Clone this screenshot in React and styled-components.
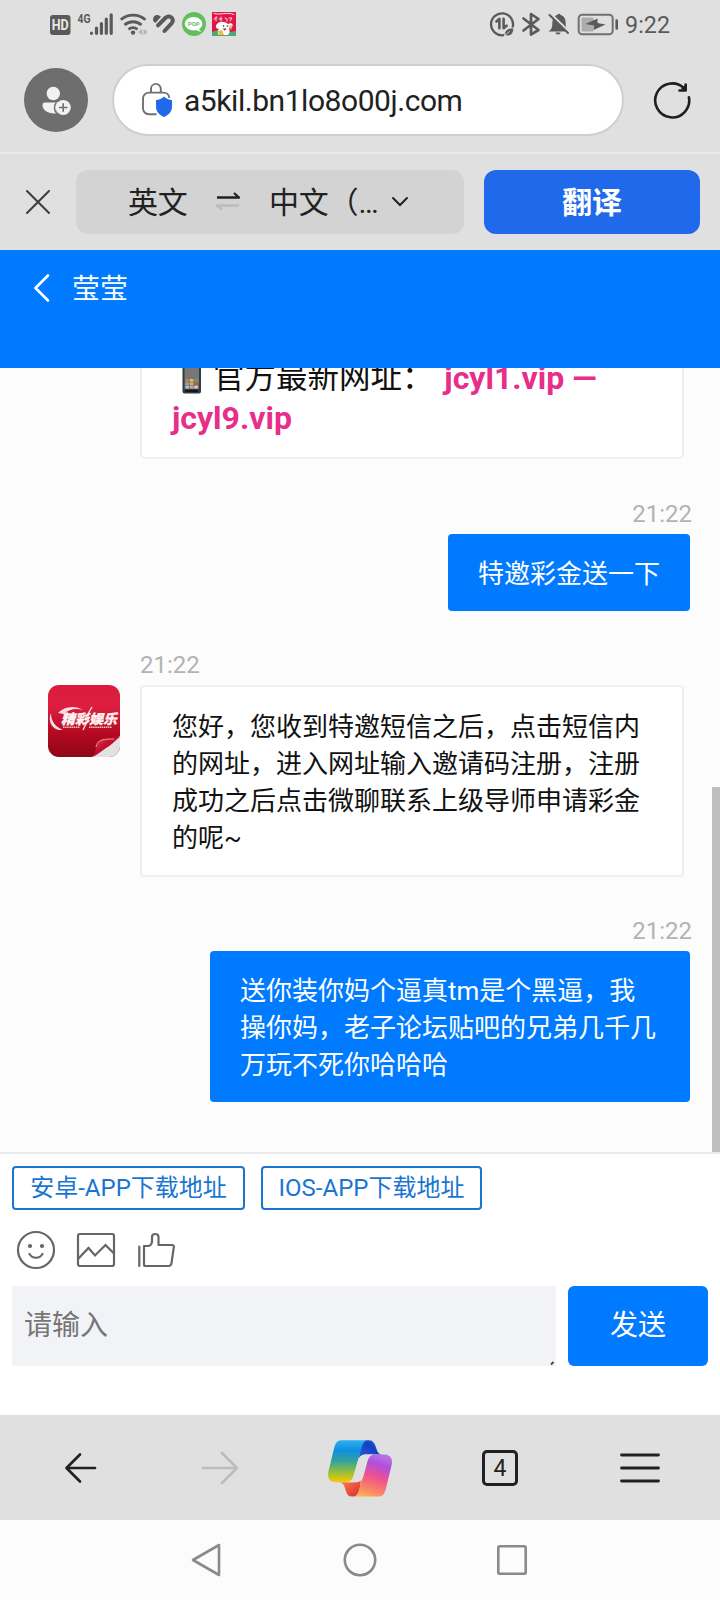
import React from "react";
import styled, { createGlobalStyle, css } from "styled-components";

const Global = createGlobalStyle`
  *, *::before, *::after { box-sizing: border-box; }
  body {
    margin: 0;
    background: #fcfcfc;
    font-family: Roboto, "Noto Sans CJK SC", sans-serif;
  }
  svg { display: block; flex: none; }
  button { font-family: inherit; margin: 0; }
`;

const Screen = styled.div`
  width: 720px;
  height: 1600px;
  display: flex;
  flex-direction: column;
  overflow: hidden;
`;

/* ---------- system status bar ---------- */
const StatusBar = styled.header`
  height: 50px;
  flex: none;
  padding: 0 50px;
  background: #e0e0e0;
  color: #5a5a5a;
  display: flex;
  justify-content: space-between;
`;
const StatusGroup = styled.div`
  display: flex;
  align-items: flex-start;
`;
const Clock = styled.span`
  font-size: 23.3px;
  line-height: 50px;
  margin-left: 6px;
`;

/* ---------- browser address bar ---------- */
const AddressBar = styled.div`
  height: 104px;
  flex: none;
  padding: 14px 24px 0;
  background: #e0e0e0;
  border-bottom: 2px solid #e9e9e9;
  display: flex;
  align-items: flex-start;
`;
const Profile = styled.button`
  width: 64px;
  height: 64px;
  margin-top: 4px;
  padding: 0;
  border: 0;
  border-radius: 50%;
  background: #6e6e6e;
`;
const UrlField = styled.div`
  width: 512px;
  height: 72px;
  margin-left: 24px;
  padding-left: 27px;
  border: 2px solid #cfcfcf;
  border-radius: 36px;
  background: #fff;
  display: flex;
  align-items: center;
`;
const UrlText = styled.span`
  margin-left: 12px;
  font-size: 30px;
  letter-spacing: -0.45px;
  color: #212121;
  white-space: nowrap;
`;
const Reload = styled.button`
  margin: 17px 0 0 29px;
  padding: 0;
  border: 0;
  background: none;
`;

/* ---------- translate bar ---------- */
const TranslateBar = styled.div`
  height: 96px;
  flex: none;
  padding: 0 20px 0 24px;
  background: #e0e0e0;
  display: flex;
  align-items: center;
  color: #212121;
`;
const LanguagePill = styled.div`
  width: 388px;
  height: 64px;
  margin: 0 20px 0 24px;
  padding-left: 52px;
  border-radius: 12px;
  background: #d3d3d3;
  display: flex;
  align-items: center;
  font-size: 30px;
  white-space: nowrap;
`;
const Language = styled.span`
  width: ${(p) => p.$width}px;
  padding-bottom: 4px;
  letter-spacing: -0.2px;
`;
const SwapIcon = styled.svg`
  margin-right: 29px;
`;
const TranslateButton = styled.button`
  flex: 1;
  height: 64px;
  border: 0;
  padding: 0 0 4px;
  border-radius: 12px;
  background: #2169eb;
  color: #fff;
  font-size: 30px;
  font-weight: 700;
`;

/* ---------- chat header ---------- */
const ChatHeader = styled.div`
  height: 118px;
  flex: none;
  padding: 16px 32px 0;
  background: #007aff;
  color: #fff;
  display: flex;
`;
const ChatTitle = styled.h1`
  margin: 0 0 0 20px;
  font-size: 28px;
  line-height: 48px;
  font-weight: 400;
`;

/* ---------- messages ---------- */
const MessageList = styled.main`
  position: relative;
  height: 784px;
  flex: none;
  padding: 0 30px 50px 48px;
  overflow: hidden;
  background: #fcfcfc;
  display: flex;
  flex-direction: column;
  justify-content: flex-end;
  gap: 40.5px;
`;
const MessageRow = styled.div`
  display: flex;
  flex-direction: column;
  flex: none;
  align-items: ${(p) => (p.$own ? "flex-end" : "flex-start")};
  padding-left: ${(p) => (p.$own ? 0 : 92)}px;
`;
const WithAvatar = styled.div`
  display: flex;
  gap: 20px;
  margin-left: -92px;
`;
const Time = styled.time`
  height: 34px;
  font-size: 24px;
  line-height: 29px;
  color: #b3b3b3;
  margin-right: -2px;
`;
const Bubble = styled.div`
  font-size: 26px;
  line-height: 37px;
  border-radius: 4px;
  ${(p) =>
    p.$own
      ? css`
          max-width: 480px;
          padding: 22px 30px 18px;
          background: #007aff;
          color: #fff;
        `
      : css`
          width: 544px;
          padding: 21.5px 30px 18px;
          border: 2px solid #efefef;
          background: #fff;
          color: #111;
        `}
`;
const NoticeBubble = styled(Bubble)`
  font-size: 31.5px;
  line-height: 40px;
  padding: 0 20px 18px 30px;
  border-radius: 5px;
`;
const NoticeLine = styled.div`
  display: flex;
  align-items: flex-start;
  white-space: pre;
  svg { margin: 3px 11px 0 10px; }
`;
const Link = styled.b`
  color: #e62e8a;
  font-size: 32px;
`;
const NoticeLink = styled(Link)`
  margin-left: 3px;
`;
const Scrollbar = styled.div`
  position: absolute;
  right: 0;
  top: 419px;
  bottom: 0;
  width: 8px;
  background: #bfbfbf;
`;

/* ---------- composer ---------- */
const Composer = styled.section`
  height: 263px;
  flex: none;
  padding: 12px 12px 0;
  border-top: 2px solid #ebebed;
  background: #fff;
`;
const QuickLinks = styled.div`
  display: flex;
  gap: 16px;
`;
const QuickLink = styled.button`
  width: ${(p) => p.$width}px;
  height: 44px;
  padding: 0;
  border: 2px solid #1a75d2;
  border-radius: 4px;
  background: #fff;
  color: #1a75d2;
  font-size: 24px;
  line-height: 36px;
  white-space: nowrap;
`;
const Tools = styled.div`
  display: flex;
  gap: 20px;
  padding: 20px 0 16px 4px;
`;
const InputRow = styled.div`
  display: flex;
  gap: 12px;
`;
const Input = styled.div`
  width: 544px;
  height: 80px;
  padding-left: 12px;
  background: #f2f3f7;
  color: #757575;
  font-size: 28px;
  display: flex;
  justify-content: space-between;
  align-items: flex-end;
`;
const Placeholder = styled.span`
  line-height: 80px;
  height: 80px;
`;
const SendButton = styled.button`
  width: 140px;
  height: 80px;
  padding: 0 0 6px;
  border: 0;
  border-radius: 6px;
  background: #007aff;
  color: #fff;
  font-size: 28px;
`;

/* ---------- browser toolbar and system navigation ---------- */
const Toolbar = styled.nav`
  height: 105px;
  flex: none;
  padding: 1px 10px 0;
  background: #e0e0e0;
  display: grid;
  grid-template-columns: repeat(5, 1fr);
  align-items: center;
  justify-items: center;
`;
const TabCount = styled.span`
  width: 36px;
  height: 36px;
  border: 3px solid #212121;
  border-radius: 5px;
  color: #212121;
  font-size: 23px;
  line-height: 32px;
  text-align: center;
`;
const SystemNav = styled.nav`
  height: 80px;
  flex: none;
  background: #fcfcfc;
  display: flex;
  align-items: center;
  justify-content: center;
  gap: 116px;
`;

const LeftStatusIcons = () => (
  <svg width="190" height="50" viewBox="50 0 190 50" fill="none" stroke="#5a5a5a" strokeLinecap="round">
    <rect x="50" y="15" width="20.5" height="20" rx="3" fill="#5a5a5a" stroke="none" />
    <text x="51.7" y="30" fontSize="14.5" fontWeight="700" fill="#e8e8e8" stroke="none" textLength="17" lengthAdjust="spacingAndGlyphs">HD</text>
    <text x="77.5" y="23.2" fontSize="13.5" fontWeight="700" fill="#5a5a5a" stroke="none" textLength="13" lengthAdjust="spacingAndGlyphs">4G</text>
    <path d="M91.5 33v.3M96.5 28v5.3M101.4 23.5v9.8M106.3 19v14.3M111.2 14.8v18.5" strokeWidth="3.2" />
    <path d="M120.8 19.8a18.500 18.500 0 0 1 24.600 0M124.500 25a12.800 12.800 0 0 1 17 0M128.500 29.300a7.500 7.500 0 0 1 9 0" strokeLinecap="butt" strokeWidth="2.8" />
    <circle cx="133" cy="32.600" r="2.200" fill="#5a5a5a" stroke="none" />
    <path d="M142.200 29v6l-4.200-3zM143.600 29v6l4.200-3z" fill="#b4b4b4" stroke="none" />
    <path d="M153 19.500c0-4.500 4.500-6 8-2.800l-5.500 6.300c-1.600-.8-2.500-2-2.500-3.500z" fill="#5a5a5a" stroke="none" />
    <path d="M158 25.300l7.500-7.500c2.500-2.300 5.500-1.400 6.700.5 1 1.800.8 3.400-.6 5L164.500 31" strokeWidth="4" />
    <circle cx="194" cy="24" r="12" fill="#62bd5b" stroke="none" />
    <ellipse cx="193.600" cy="23.700" rx="8.900" ry="6.700" fill="#fff" stroke="none" />
    <path d="M198 28l3.500 4-6-2z" fill="#fff" stroke="none" />
    <text x="188" y="26" fontSize="5.800" fontWeight="700" fill="#62bd5b" stroke="none" textLength="11.500">POP</text>
    <g stroke="none">
      <rect x="212" y="12" width="24" height="24" fill="#df1747" />
      <path d="M212 32l6-2 12 2 6-1v5h-24z" fill="#51a877" />
      <path d="M217 24c2-3 8-3 11 0 3-2 6 0 4 2l-3 2c1 2 1 5-1 7h-9c-2-2-1-5 0-6-3 0-4-3-2-5z" fill="#fff" />
      <path d="M218 31l4-1 2 5h-5zM229 26l4-1-2 5z" fill="#f3bd46" />
      <circle cx="223.500" cy="26" r=".8" fill="#222" />
      <circle cx="227.500" cy="26" r=".8" fill="#222" />
      <path d="M222.500 28.500h4l-1.500 2.200z" fill="#a02030" />
    </g>
    <path d="M214 19l3-2M216 17v4M219 19h3M221 17v4M225 18l2 1v2M229 18h3l-2 3M214 13.500c6 2 13-2 20 1" stroke="#ffdbe4" strokeWidth="1" />
  </svg>
);

const RightStatusIcons = () => (
  <svg width="130" height="50" viewBox="489 0 130 50" fill="none" stroke="#5a5a5a" strokeLinecap="round" strokeLinejoin="round">
    <path d="M503.5 35.2a11 11 0 1 1 9.200-8.200" strokeWidth="2.300" />
    <path d="M496.400 21.500l3-2.700v9.400M503.600 18.800v9.400l3-2.500" strokeWidth="2.600" />
    <path d="M505 35.500c-1.500-5 3-8 8.600-7.500.5 5.500-3 9.200-8.600 7.500zM504.500 36l5-4.500" fill="#5a5a5a" stroke="#e0e0e0" strokeWidth=".8" />
    <path d="M523.500 18.500l15 11.500-7.500 4.500V14l7.500 5-15 11.500" strokeWidth="2.700" />
    <path d="M548.500 31.500c3-2 3.800-4 3.800-7.500 0-5 2-8.500 5-9 .8-1.800 2.600-1.800 3.400 0 3.800 1 5 4.500 5 8.500 0 4 1 6 3 8z" fill="#5a5a5a" stroke="none" />
    <path d="M555.500 32.500h5a2.500 2 0 0 1-5 0z" fill="#5a5a5a" stroke="none" />
    <path d="M549 12.500l21 20.500" stroke="#e0e0e0" strokeWidth="3" />
    <path d="M549.500 15l18.500 18" strokeWidth="2" />
    <rect x="578.700" y="14.700" width="34" height="19.500" rx="3.500" stroke="#707070" strokeWidth="2" />
    <rect x="581.500" y="17.500" width="12" height="14" rx="1" fill="#adadad" stroke="none" />
    <path d="M597.500 18.500l-12 5.500 8.500 1.500-.5 4.500 12-5.500-8-1.500z" fill="#5a5a5a" stroke="none" />
    <path d="M616.700 20.500v8" strokeWidth="2.600" />
  </svg>
);

const ProfileIcon = () => (
  <svg width="64" height="64" viewBox="24 68 64 64" fill="#f1f1f1">
    <circle cx="53.300" cy="93.500" r="6.700" />
    <path d="M45 102.500h14a8 8 0 0 0-1.500 11h-3C47 113 42.500 110 42.500 105a2.500 2.500 0 0 1 2.500-2.500z" />
    <circle cx="63.200" cy="107.500" r="7.600" />
    <path d="M63.200 103.200v8.600M58.900 107.500h8.600" stroke="#6e6e6e" strokeWidth="1.600" />
    <path d="M56.300 102.500a8.500 8.500 0 0 0 1.500 12" fill="none" stroke="#6e6e6e" strokeWidth="1.500" />
  </svg>
);

const SiteSecurityIcon = () => (
  <svg width="31" height="36" viewBox="141 83 31 36" fill="none">
    <path d="M151 93.500v-3.700a4.900 4.900 0 0 1 9.800 0v3.700M156.500 115.200h-7.700a5.800 5.800 0 0 1-5.800-5.800v-10a5.800 5.800 0 0 1 5.800-5.800h14.700a5.800 5.800 0 0 1 5.800 5.200" stroke="#707070" strokeWidth="1.900" />
    <path d="M164 97.500c2.300 2.300 5 3.300 8 3.500v6.500c0 5.500-3.500 8.500-8 10.500-4.500-2-8-5-8-10.500V101c3-.2 5.700-1.200 8-3.500z" fill="#2169eb" />
  </svg>
);

const ReloadIcon = () => (
  <svg width="38" height="38" viewBox="653 81 38 38" fill="none" stroke="#1f1f1f" strokeWidth="2.600" strokeLinecap="round" strokeLinejoin="round">
    <path d="M688.900 97.200a17 17 0 1 1-5.200-9.300" />
    <path d="M685.700 84.500v6h-6.200" />
    <path d="M682 88.500l3-2.500v4z" fill="#1f1f1f" strokeWidth="1.500" />
  </svg>
);

const BrandAvatar = () => (
  <svg width="72" height="72" viewBox="0 0 72 72">
    <defs>
      <linearGradient id="brandRed" x1="0" y1="0" x2="0" y2="1">
        <stop offset="0" stopColor="#da1c3c" />
        <stop offset=".3" stopColor="#dc1f40" />
        <stop offset=".65" stopColor="#b60a22" />
        <stop offset="1" stopColor="#8f0714" />
      </linearGradient>
      <linearGradient id="curl" x1="0" y1="0" x2="1" y2="1">
        <stop offset="0" stopColor="#e8506a" />
        <stop offset=".4" stopColor="#c4122f" />
        <stop offset="1" stopColor="#8c0717" />
      </linearGradient>
      <clipPath id="brandClip"><rect width="72" height="72" rx="11" /></clipPath>
    </defs>
    <g clipPath="url(#brandClip)">
      <rect width="72" height="72" fill="url(#brandRed)" />
      <path d="M72 51L44 72h28z" fill="#e2e2e2" />
      <path d="M72 52c-6 4-8 8-14 11-4 3-8 6-13 9 4-6 2-9 4-13 3-6 12-5 23-7z" fill="url(#curl)" />
      <path d="M48 62c1-8 9-8 18-8" fill="none" stroke="#f28b9b" strokeWidth="1" />
      <path d="M3 28c-4 9 2 18 12 17-7-3-12-8-12-17z" fill="#f8dfe2" />
      <path d="M10 28c6-7 17-8 25-3-7-2-14-1-19 4z" fill="#f8dfe2" />
      <path d="M44 22l-7 12 4-1-6 12" fill="none" stroke="#f8e5e7" strokeWidth="1.300" />
    </g>
    <text x="13" y="38.500" fontSize="13.500" fontWeight="900" fontStyle="italic" fill="#fff2f2" stroke="#fff2f2" strokeWidth=".3" textLength="56" lengthAdjust="spacingAndGlyphs">精彩娱乐</text>
    <path d="M15 42.300h17M41 42.300h23" stroke="#f3c5ca" strokeWidth="1.600" strokeDasharray="1.500 .6" />
  </svg>
);

const PhoneIcon = () => (
  <svg width="20" height="34" viewBox="0 0 20 34">
    <rect x=".5" y="0" width="18.500" height="32.500" rx="2" fill="#343a3f" />
    <rect x="2.500" y="3" width="14.500" height="25" fill="#777" />
    <rect x="2.500" y="3" width="14.500" height="4" fill="#dfe9f5" />
    {["#d9773c", "#e0c24d", "#6a9f5b", "#8aa2d8", "#e6b13c", "#c9534b", "#b7c3d3", "#d6a1a1", "#cfd6de"].map((c, i) => (
      <rect key={i} x={3.5 + (i % 3) * 4.4} y={18 + Math.floor(i / 3) * 3.4} width="3.400" height="2.600" fill={c} />
    ))}
    <path d="M3 30h13" stroke="#15181b" strokeWidth="2" />
  </svg>
);

const ToolIcon = ({ children }) => (
  <svg width="40" height="40" viewBox="0 0 40 40" fill="none" stroke="#666" strokeWidth="2.200" strokeLinejoin="round" strokeLinecap="round">
    {children}
  </svg>
);

const CopilotIcon = () => (
  <svg width="64" height="57" viewBox="54 44 192 170">
    <defs>
      <linearGradient id="cpLeft" x1="0" y1="0" x2="0" y2="1">
        <stop offset="0" stopColor="#2fb1ee" />
        <stop offset=".25" stopColor="#0d8ee0" />
        <stop offset=".5" stopColor="#35a39a" />
        <stop offset=".75" stopColor="#93bd3c" />
        <stop offset="1" stopColor="#fbc805" />
      </linearGradient>
      <linearGradient id="cpRight" x1=".6" y1="0" x2=".3" y2="1">
        <stop offset="0" stopColor="#b870e4" />
        <stop offset=".2" stopColor="#b04fdf" />
        <stop offset=".5" stopColor="#ee518e" />
        <stop offset=".8" stopColor="#fc8168" />
        <stop offset="1" stopColor="#ffae55" />
      </linearGradient>
      <linearGradient id="cpBlue" x1="0" y1="1" x2="1" y2="0">
        <stop offset="0" stopColor="#2c5fe0" />
        <stop offset=".6" stopColor="#1440c0" />
        <stop offset="1" stopColor="#2280e0" />
      </linearGradient>
      <linearGradient id="cpOrange" x1="0" y1="0" x2="1" y2="1">
        <stop offset="0" stopColor="#fd8b3c" />
        <stop offset=".5" stopColor="#f25a3e" />
        <stop offset="1" stopColor="#c92e3c" />
      </linearGradient>
    </defs>
    {/* folded ends behind the two ribbons */}
    <path d="M170 44h6c10 0 16 5 20 16l4 12c3 9 7 14 16 15h-50c-10 0-16 5-20 16l4-32c5-17 9-27 20-27z" fill="url(#cpBlue)" />
    <path d="M132 213h-6c-10 0-15-6-18-16l-4-12c-3-9-7-14-16-15h46c10 0 16-5 20-16l-4 32c-5 17-7 27-18 27z" fill="url(#cpOrange)" />
    {/* left and right ribbons, leaving a slanted gap between them */}
    <path d="M93 44h80c-10 2-15 11-18 22l-24 84c-4 14-9 20-26 20H78c-20 0-28-14-22-35l16-66c4-16 10-25 21-25z" fill="url(#cpLeft)" />
    <path d="M207 213h-77c10-2 15-11 18-22l22-84c4-14 9-20 26-20h26c20 0 28 14 22 35l-16 66c-4 16-10 25-21 25z" fill="url(#cpRight)" />
    <path d="M170 87h26c-13 0-19 6-23 19l-13 48c-4 11-10 16-20 16h-35c15 0 22-6 26-20l13-46c4-12 12-17 26-17z" fill="#e0e0e0" />
  </svg>
);

export default function App() {
  return (
    <Screen>
      <Global />
      <StatusBar>
        <StatusGroup><LeftStatusIcons /></StatusGroup>
        <StatusGroup><RightStatusIcons /><Clock>9:22</Clock></StatusGroup>
      </StatusBar>

      <AddressBar>
        <Profile aria-label="profile"><ProfileIcon /></Profile>
        <UrlField><SiteSecurityIcon /><UrlText>a5kil.bn1lo8o00j.com</UrlText></UrlField>
        <Reload aria-label="reload"><ReloadIcon /></Reload>
      </AddressBar>

      <TranslateBar>
        <svg width="28" height="28" viewBox="0 0 28 28" stroke="#3c3c3c" strokeWidth="2" strokeLinecap="round">
          <path d="M3 3l22 22M25 3L3 25" />
        </svg>
        <LanguagePill>
          <Language $width={88}>英文</Language>
          <SwapIcon width="24" height="22" viewBox="0 0 24 22" fill="none" strokeWidth="2.300" strokeLinejoin="round">
            <path d="M1 6.500h22l-5-4.500" stroke="#212121" />
            <path d="M23 14.500H1l5 4" stroke="#bcbcbc" />
          </SwapIcon>
          <Language $width={122}>中文（…</Language>
          <svg width="18" height="12" viewBox="0 0 18 12" fill="none" stroke="#212121" strokeWidth="2" strokeLinecap="round">
            <path d="M2 2l7 7 7-7" />
          </svg>
        </LanguagePill>
        <TranslateButton>翻译</TranslateButton>
      </TranslateBar>

      <ChatHeader>
        <svg width="20" height="44" viewBox="0 0 20 44" fill="none" stroke="#fff" strokeWidth="2.600" strokeLinecap="round" strokeLinejoin="round">
          <path d="M16 9.500L3.500 22 16 34.500" />
        </svg>
        <ChatTitle>莹莹</ChatTitle>
      </ChatHeader>

      <MessageList>
        <MessageRow>
          <NoticeBubble>
            <NoticeLine><PhoneIcon />官方最新网址： <NoticeLink>jcyl1.vip —</NoticeLink></NoticeLine>
            <Link>jcyl9.vip</Link>
          </NoticeBubble>
        </MessageRow>
        <MessageRow $own>
          <Time>21:22</Time>
          <Bubble $own>特邀彩金送一下</Bubble>
        </MessageRow>
        <MessageRow>
          <Time>21:22</Time>
          <WithAvatar>
            <BrandAvatar />
            <Bubble>您好，您收到特邀短信之后，点击短信内的网址，进入网址输入邀请码注册，注册成功之后点击微聊联系上级导师申请彩金的呢~</Bubble>
          </WithAvatar>
        </MessageRow>
        <MessageRow $own>
          <Time>21:22</Time>
          <Bubble $own>送你装你妈个逼真tm是个黑逼，我操你妈，老子论坛贴吧的兄弟几千几万玩不死你哈哈哈</Bubble>
        </MessageRow>
        <Scrollbar />
      </MessageList>

      <Composer>
        <QuickLinks>
          <QuickLink $width={233}>安卓-APP下载地址</QuickLink>
          <QuickLink $width={221}>IOS-APP下载地址</QuickLink>
        </QuickLinks>
        <Tools>
          <ToolIcon>
            <circle cx="20" cy="20" r="18" />
            <path d="M13.500 24c3 5 10 5 13 0" />
            <circle cx="14" cy="16" r="1" fill="#666" />
            <circle cx="26" cy="16" r="1" fill="#666" />
          </ToolIcon>
          <ToolIcon>
            <rect x="2" y="4" width="36" height="32" rx="2" />
            <path d="M2 29l10.500-11 6.500 7.500L29.500 15l8.500 8.500" strokeLinejoin="miter" />
          </ToolIcon>
          <ToolIcon>
            <path d="M3.300 16.500v19.500M8 16h4.500c2.500-.5 3.500-2.500 3.500-5V7c0-4 6.500-4 6.500 0v8h13.500c1.500 0 2 1 1.800 2.200l-2.300 16c-.3 2-1.200 2.800-3 2.800H9.500c-1 0-1.500-.6-1.500-1.600z" />
          </ToolIcon>
        </Tools>
        <InputRow>
          <Input>
            <Placeholder>请输入</Placeholder>
            <svg width="6" height="6" viewBox="0 0 6 6"><path d="M1 4.500l2.500-2.500" stroke="#444" strokeWidth="1.800" /></svg>
          </Input>
          <SendButton>发送</SendButton>
        </InputRow>
      </Composer>

      <Toolbar>
        <svg width="34" height="34" viewBox="0 0 34 34" fill="none" stroke="#212121" strokeWidth="2.700" strokeLinecap="round" strokeLinejoin="round">
          <path d="M32 17H3.500M17 3.500L3.500 17 17 30.500" />
        </svg>
        <svg width="38" height="34" viewBox="0 0 38 34" fill="none" stroke="#bdbdbd" strokeWidth="2.700" strokeLinecap="round" strokeLinejoin="round">
          <path d="M2 17h34M21 2l15 15-15 15" />
        </svg>
        <CopilotIcon />
        <TabCount>4</TabCount>
        <svg width="40" height="30" viewBox="0 0 40 30" stroke="#212121" strokeWidth="2.800" strokeLinecap="round">
          <path d="M1.500 2h37M1.500 15h37M1.500 28h37" />
        </svg>
      </Toolbar>

      <SystemNav>
        <svg width="36" height="36" viewBox="0 0 36 36" fill="none" stroke="#8a8a8a" strokeWidth="2.600" strokeLinejoin="round">
          <path d="M29 3v30L3 18z" />
        </svg>
        <svg width="36" height="36" viewBox="0 0 36 36" fill="none" stroke="#8a8a8a" strokeWidth="2.600">
          <circle cx="18" cy="18" r="15.200" />
        </svg>
        <svg width="36" height="36" viewBox="0 0 36 36" fill="none" stroke="#8a8a8a" strokeWidth="2.600">
          <rect x="4.300" y="4.300" width="27.400" height="27.400" rx="1.500" />
        </svg>
      </SystemNav>
    </Screen>
  );
}
